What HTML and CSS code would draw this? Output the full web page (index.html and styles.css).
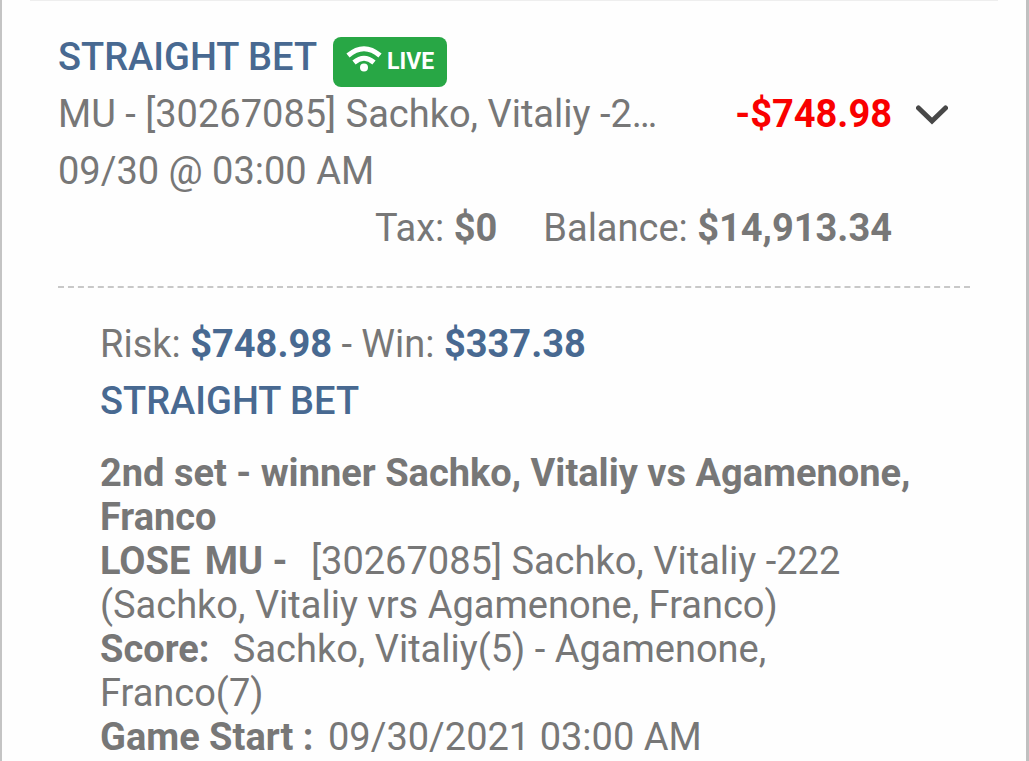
FILE: index.html
```
<!DOCTYPE html>
<html lang="en">
<head>
<meta charset="UTF-8">
<meta name="viewport" content="width=device-width, initial-scale=1">
<title>Straight Bet</title>
<link rel="stylesheet" href="styles.css">
</head>
<body>

<div class="panel">
	<div class="bet">

		<!-- Summary -->
		<div class="summary">
			<div class="title-row">
				<span class="bet-type">STRAIGHT BET</span>
				<span class="live">
					<svg class="wifi" viewBox="0 0 36 26" aria-hidden="true">
						<path d="M2 9.500Q18 -4 34 9.500M8 16.500Q18 8 28 16.500" fill="none" stroke="#fff" stroke-width="5"/>
						<circle cx="18" cy="21.500" r="4" fill="#fff"/>
					</svg>
					LIVE
				</span>
			</div>
			<div class="pick-row">
				<div class="pick">MU - [30267085] Sachko, Vitaliy -222 (Sachko, Vitaliy vrs Agamenone, Franco)</div>
				<div class="amount">-$748.98</div>
				<button class="toggle" type="button" aria-label="Toggle details" aria-expanded="true">
					<svg class="chevron" viewBox="0 0 32 20" aria-hidden="true">
						<path d="M2.500 3L16 16L29.500 3" fill="none" stroke="#484848" stroke-width="5" stroke-linecap="round"/>
					</svg>
				</button>
			</div>
			<div class="date">09/30 @ 03:00 AM</div>
			<div class="totals">
				<span>Tax: <b>$0</b></span>
				<span>Balance: <b>$14,913.34</b></span>
			</div>
		</div>

		<!-- Details -->
		<div class="details">
			<div class="stake">Risk: <b>$748.98</b> - Win: <b>$337.38</b></div>
			<div class="bet-type">STRAIGHT BET</div>
			<div class="lines">
				<div><b>2nd set - winner Sachko, Vitaliy vs Agamenone, Franco</b></div>
				<div><b class="label">LOSE</b> <b class="label wide">MU -</b> [30267085] Sachko, Vitaliy -222 (Sachko, Vitaliy vrs Agamenone, Franco)</div>
				<div><b class="label wide">Score:</b> Sachko, Vitaliy(5) - Agamenone, Franco(7)</div>
				<div><b class="label">Game Start :</b> 09/30/2021 03:00 AM</div>
			</div>
		</div>

	</div>
</div>

</body>
</html>
```
FILE: styles.css
```
* {
	box-sizing: border-box;
}

body {
	margin: 0;
	background: #fefefe;
	color: #777;
	font-family: Roboto, sans-serif;
	font-size: 38px;
	line-height: 57px;
}

b {
	font-weight: 700;
}

.panel {
	min-height: 100vh;
	padding: 0 28px;
	border-left: 2px solid #c4c4c4;
	border-right: 3px solid #c0c0c0;
}

.bet {
	padding: 28px 28px 0;
	border-top: 1px solid #eee;
}

.bet-type {
	color: #486991;
	font-weight: 500;
}

.title-row {
	display: flex;
	align-items: flex-start;
	gap: 16px;
}

.live {
	display: flex;
	align-items: center;
	gap: 5px;
	height: 50px;
	margin-top: 8px;
	margin-bottom: -1px;
	padding: 0 13px;
	border-radius: 8px;
	background: #28a745;
	color: #fff;
	font-size: 23px;
	font-weight: 700;
	line-height: 50px;
}

.wifi {
	width: 36px;
	height: 26px;
	margin-bottom: 6px;
}

.pick-row {
	display: flex;
	align-items: center;
}

.pick {
	flex: 1;
	overflow: hidden;
	white-space: nowrap;
	text-overflow: ellipsis;
}

.amount {
	margin-left: 64px;
	color: #f90000;
	font-weight: 700;
}

.toggle {
	display: flex;
	width: 78px;
	padding: 0 22px 0 24px;
	border: 0;
	background: none;
	cursor: pointer;
}

.chevron {
	width: 32px;
	height: 20px;
}

.totals {
	display: flex;
	justify-content: flex-end;
	gap: 46px;
	padding-right: 78px;
}

.details {
	margin-top: 29px;
	padding: 28px 42px 0;
	border-top: 2px dashed #c8c8c8;
}

.stake b {
	color: #486991;
}

.lines {
	margin-top: 21px;
	line-height: 44px;
}

.label {
	margin-right: 5px;
}

.wide {
	margin-right: 14px;
}
```
